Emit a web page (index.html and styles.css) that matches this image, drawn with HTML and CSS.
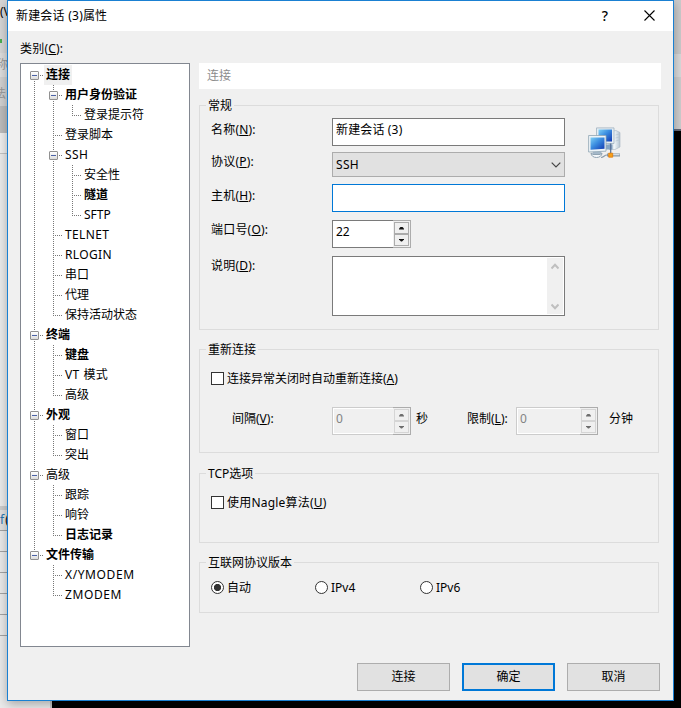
FILE: index.html
```html
<!DOCTYPE html>
<html lang="zh-CN">
<head>
<meta charset="utf-8">
<title>新建会话 (3)属性</title>
<link rel="stylesheet" href="styles.css">
</head>
<body>
<div class="backdrop">
  <div class="back-left">
    <div class="bl-menu">(V</div>
    <div class="bl-tool"><span class="bl-arrow"></span></div>
    <div class="bl-name">称</div>
    <div class="bl-host">法</div>
    <div class="bl-tab"></div>
    <div class="bl-head"></div>
    <div class="bl-body"></div>
    <div class="bl-split"></div>
    <div class="bl-cols"><span>f</span> (</div>
    <div class="bl-rows"></div>
    <div class="bl-end"></div>
  </div>
  <div class="back-right"></div>
</div>

<main class="dialog">
  <header class="titlebar">
    <span class="title">新建会话 (3)属性</span>
    <span class="help">?</span>
    <svg class="close" width="11" height="11" viewBox="0 0 11 11"><path d="M.5.5l10 10M10.5.5l-10 10" stroke="#000" stroke-width="1.1" fill="none"/></svg>
  </header>

  <div class="content">
    <section class="side">
      <div class="category">类别(<u>C</u>):</div>
      <div class="tree">
        <div class="row"><i class="g ef"></i><b class="sel">连接</b></div>
        <div class="row"><i class="g v"></i><i class="g e"></i><b>用户身份验证</b></div>
        <div class="row"><i class="g v"></i><i class="g v"></i><i class="g l"></i><span>登录提示符</span></div>
        <div class="row"><i class="g v"></i><i class="g t"></i><span>登录脚本</span></div>
        <div class="row"><i class="g v"></i><i class="g e"></i><span class="lat">SSH</span></div>
        <div class="row"><i class="g v"></i><i class="g v"></i><i class="g t"></i><span>安全性</span></div>
        <div class="row"><i class="g v"></i><i class="g v"></i><i class="g t"></i><b>隧道</b></div>
        <div class="row"><i class="g v"></i><i class="g v"></i><i class="g l"></i><span>SFTP</span></div>
        <div class="row"><i class="g v"></i><i class="g t"></i><span class="lat">TELNET</span></div>
        <div class="row"><i class="g v"></i><i class="g t"></i><span class="lat">RLOGIN</span></div>
        <div class="row"><i class="g v"></i><i class="g t"></i><span>串口</span></div>
        <div class="row"><i class="g v"></i><i class="g t"></i><span>代理</span></div>
        <div class="row"><i class="g v"></i><i class="g l"></i><span>保持活动状态</span></div>
        <div class="row"><i class="g e"></i><b>终端</b></div>
        <div class="row"><i class="g v"></i><i class="g t"></i><b>键盘</b></div>
        <div class="row"><i class="g v"></i><i class="g t"></i><span class="vt">VT 模式</span></div>
        <div class="row"><i class="g v"></i><i class="g l"></i><span>高级</span></div>
        <div class="row"><i class="g e"></i><b>外观</b></div>
        <div class="row"><i class="g v"></i><i class="g t"></i><span>窗口</span></div>
        <div class="row"><i class="g v"></i><i class="g l"></i><span>突出</span></div>
        <div class="row"><i class="g e"></i><span>高级</span></div>
        <div class="row"><i class="g v"></i><i class="g t"></i><span>跟踪</span></div>
        <div class="row"><i class="g v"></i><i class="g t"></i><span>响铃</span></div>
        <div class="row"><i class="g v"></i><i class="g l"></i><b>日志记录</b></div>
        <div class="row"><i class="g el"></i><b>文件传输</b></div>
        <div class="row"><i class="g"></i><i class="g t"></i><span class="lat modem">X/YMODEM</span></div>
        <div class="row"><i class="g"></i><i class="g l"></i><span class="lat modem">ZMODEM</span></div>
      </div>
    </section>

    <section class="page">
      <div class="page-title">连接</div>

      <div class="group general">
        <div class="legend"><span>常规</span></div>
        <div class="fields">
          <div class="lab">名称(<u>N</u>):</div><div class="input">新建会话 (3)</div>
          <div class="lab lab-up">协议(<u>P</u>):</div>
          <div class="select"><span>SSH</span><svg width="10" height="6" viewBox="0 0 10 6"><path d="M.7.7L5 5 9.3.7" fill="none" stroke="#444" stroke-width="1.2"/></svg></div>
          <div class="lab">主机(<u>H</u>):</div><div class="input focus"></div>
          <div class="lab lab-up">端口号(<u>O</u>):</div>
          <div class="spin"><div class="val">22</div><div class="arrows"><i class="up"></i><i class="down"></i></div></div>
          <div class="lab lab-up">说明(<u>D</u>):</div>
          <div class="area"><div class="scroll">
            <svg width="8" height="7" viewBox="0 0 8 7"><path d="M.5 5.5L4 1.8 7.5 5.5" fill="none" stroke="#bfbfbf" stroke-width="2"/></svg>
            <svg width="8" height="7" viewBox="0 0 8 7"><path d="M.5 1.5L4 5.2 7.5 1.5" fill="none" stroke="#bfbfbf" stroke-width="2"/></svg>
          </div></div>
        </div>
        <svg class="pc" width="34" height="34" viewBox="0 0 34 34">
          <defs>
            <linearGradient id="scr" x1="0" y1="0" x2="1" y2="1"><stop offset="0" stop-color="#7fd0f5"/><stop offset=".45" stop-color="#3b8de0"/><stop offset="1" stop-color="#1238b0"/></linearGradient>
            <linearGradient id="tower" x1="0" y1="0" x2="1" y2="0"><stop offset="0" stop-color="#b9c6d2"/><stop offset=".5" stop-color="#eef4f8"/><stop offset="1" stop-color="#b4c4d1"/></linearGradient>
          </defs>
          <path d="M25 4l3-.5 4 2v14.500l-5 2.500h-6V5z" fill="url(#tower)" stroke="#a8b7c4" stroke-width=".6"/>
          <path d="M27.500 8l4-1M27.500 11l4-1M27.500 14l4-1" stroke="#b4c2ce" stroke-width=".6"/>
          <path d="M8.500 .900h17.500V16.500H8.500z" fill="#e4edf3" stroke="#9fb1bf" stroke-width=".8"/>
          <path d="M10.500 2.500h13.500V14.500H10.500z" fill="url(#scr)"/>
          <path d="M18 17.500h6.500v5h-6.500z" fill="#86a5c6"/>
          <path d="M19 28h13" stroke="#8798a7" stroke-width="3"/>
          <path d="M20 27.700h11.500" stroke="#e6edf2" stroke-width="1.100"/>
          <path d="M22.700 16.500v10" stroke="#566f94" stroke-width="1.200"/>
          <path d="M5 24.500h8l1 3H4z" fill="#a4b8c9"/>
          <path d="M3 26c0 6 11 6 11 0l-2 1.500H5z" fill="#f3f7fa" stroke="#91a4b3" stroke-width="1"/>
          <path d="M.6 8.500h17.400V24.200L.6 25z" fill="#edf4f8" stroke="#8fa5b3" stroke-width=".8"/>
          <path d="M2.500 10.500h14V21.800L2.500 22.700z" fill="url(#scr)"/>
          <path d="M13 30.500c3 0 3-2.500 6-2.500" fill="none" stroke="#8c9cab" stroke-width="1.200"/>
          <path d="M20.700 26.200h4v4h-4z" fill="#f8a117" stroke="#e07b0c" stroke-width=".8"/>
        </svg>
      </div>

      <div class="group reconnect">
        <div class="legend"><span>重新连接</span></div>
        <div class="opt"><i class="check"></i>连接异常关闭时自动重新连接(<u>A</u>)</div>
        <div class="timing">
          <span class="t-int">间隔(<u>V</u>):</span>
          <div class="spin off"><div class="val">0</div><div class="arrows"><i class="up"></i><i class="down"></i></div></div>
          <span class="t-sec">秒</span>
          <span class="t-lim">限制(<u>L</u>):</span>
          <div class="spin off wide"><div class="val">0</div><div class="arrows"><i class="up"></i><i class="down"></i></div></div>
          <span class="t-min">分钟</span>
        </div>
      </div>

      <div class="group tcp">
        <div class="legend"><span>TCP选项</span></div>
        <div class="opt"><i class="check"></i>使用Nagle算法(<u>U</u>)</div>
      </div>

      <div class="group version">
        <div class="legend"><span>互联网协议版本</span></div>
        <div class="radios">
          <div class="opt"><i class="radio on"></i>自动</div>
          <div class="opt"><i class="radio"></i>IPv4</div>
          <div class="opt"><i class="radio"></i>IPv6</div>
        </div>
      </div>
    </section>
  </div>

  <footer class="buttons">
    <div class="btn">连接</div>
    <div class="btn primary">确定</div>
    <div class="btn">取消</div>
  </footer>
</main>
</body>
</html>
```
FILE: styles.css
```css
*, *::before, *::after { box-sizing: border-box; }
html, body { margin: 0; width: 681px; height: 708px; overflow: hidden; }
body {
  position: relative;
  background: #000;
  color: #000;
  font: 12px/18px "Noto Sans", "Noto Sans CJK SC", sans-serif;
  white-space: nowrap;
}
i { font-style: normal; display: block; flex: none; }
u { text-underline-offset: 1px; text-decoration-thickness: 1px; }

/* window behind the dialog */
.backdrop { display: flex; justify-content: space-between; height: 708px; }
.back-left { width: 52px; background: #ebebeb; border-right: 2px solid #c8c8c8; display: flex; flex-direction: column; }
.back-left > div { flex: none; overflow: hidden; }
.bl-menu { height: 30px; padding-top: 3px; background: #d7d7d7; }
.bl-tool { height: 23px; padding-top: 9px; background: #d7d7d7; }
.bl-arrow { display: block; width: 2px; height: 4px; background: #4caf50; }
.bl-name { height: 24px; padding-top: 3px; margin-left: -4px; background: #dedede; color: #999; }
.bl-host { height: 29px; padding-top: 8px; margin-left: -6px; background: #d2d2d2; color: #999; }
.bl-tab { height: 27px; background: #bdbdbd; }
.bl-head { height: 21px; background: #f0f0f0; border-bottom: 1px solid #c4c4c4; }
.bl-body { height: 352px; background: #ececec; }
.bl-split { height: 4px; background: #cdcdcd; }
.bl-cols { height: 21px; padding-top: 1px; background: #e2e2e2; border-bottom: 1px solid #a4a4a4; word-spacing: -2px; }
.bl-cols span { color: #2575b0; }
.bl-rows { height: 105px; background: repeating-linear-gradient(#ebebeb 0 20px, #a4a4a4 20px 21px); }
.bl-end { height: 72px; }
.back-right {
  width: 7px;
  background: linear-gradient(#cbcbcb 0 54px, #dadada 54px 77px, #cecece 77px 129px, #626878 129px 131px, #000 131px);
}

.dialog {
  position: absolute; left: 7px; top: 0;
  width: 667px; height: 701px;
  background: #f0f0f0;
  border: 1px solid #1a80d2;
  box-shadow: 0 3px 10px rgba(0, 0, 0, .3);
}
.titlebar { height: 30px; background: #fff; display: flex; align-items: center; padding: 0 18px 1px 8px; }
.title { flex: 1; letter-spacing: .15px; word-spacing: .5px; }
.help { font-size: 14px; font-weight: 500; margin-right: 36px; }
.content { display: flex; padding: 8px 12px 0; height: 616px; }
.side { width: 170px; }
.category { height: 24px; padding-top: 1px; letter-spacing: .2px; }
.tree { height: 584px; border: 1px solid #828790; background: #fff; padding: 1px 0 0 6px; }
.row { display: flex; height: 20px; line-height: 19px; }
.row b { font-weight: 700; }
.lat { letter-spacing: .35px; }
.modem { letter-spacing: .6px; }
.vt { word-spacing: 1px; letter-spacing: .2px; }
.sel { background: #f0f0f0; margin-left: -2px; padding: 0 2px; }

/* tree guides: one 19px cell per level, the stem runs at 7px */
.g {
  --d: linear-gradient(#777 50%, transparent 50%);
  --h: linear-gradient(90deg, #777 50%, transparent 50%);
  width: 19px; height: 20px; position: relative;
}
.v::before, .t::before, .l::before, .e::before, .ef::before, .el::before {
  content: ""; position: absolute; left: 7px; top: 0; width: 1px; height: 20px;
  background: var(--d) 0 0 / 1px 2px;
}
.l::before, .el::before { height: 10px; }
.ef::before { top: 10px; height: 10px; }
.t, .l, .e, .ef, .el { background: var(--h) 7px 10px / 2px 1px repeat-x; background-clip: content-box; padding-left: 7px; padding-right: 3px; background-origin: border-box; }
.e::after, .ef::after, .el::after {
  content: ""; position: absolute; left: 3px; top: 6px; width: 9px; height: 9px;
  border: 1px solid #919191; border-radius: 1px;
  background: linear-gradient(#4b63a7, #4b63a7) 1px 3px / 5px 1px no-repeat, linear-gradient(#fff, #ddd);
}

.page { width: 462px; margin-left: 9px; }
.page-title { height: 26px; margin-top: 24px; padding: 4px 8px; background: #fff; color: #8c8c8c; }
.group { width: 460px; border: 1px solid #dcdcdc; position: relative; }
.legend { height: 0; padding-left: 6px; }
.legend span { display: inline-block; position: relative; top: -9px; padding: 0 2px; background: #f0f0f0; }
.general { margin-top: 16px; height: 225px; display: grid; grid-template-columns: 365px 1fr; grid-template-rows: 0 1fr; }
.general .legend { grid-column: 1 / 3; }
.fields { padding: 12px 0 0 11px; display: grid; grid-template-columns: 121px 233px; grid-template-rows: 34px 32px 36px 36px 60px; align-items: start; }
.lab { padding-top: 3px; letter-spacing: .2px; }
.lab-up { padding-top: 1px; }
.input { height: 28px; border: 1px solid #7a7a7a; background: #fff; padding: 2px 3px; letter-spacing: .15px; }
.focus { border-color: #0078d7; }
.select { height: 25px; border: 1px solid #acacac; background: #e1e1e1; display: flex; align-items: center; justify-content: space-between; padding: 0 3px; letter-spacing: .3px; }
.area { height: 60px; border: 1px solid #7a7a7a; background: #fff; padding: 1px; display: flex; justify-content: flex-end; }
.scroll { width: 16px; background: #f0f0f0; display: flex; flex-direction: column; align-items: center; justify-content: space-between; padding: 5px 0 4px; }
.pc { margin: 21px 0 0 23px; }

.spin { width: 79px; height: 28px; border: 1px solid #7a7a7a; border-right: 0; background: #fff; display: flex; }
.val { flex: 1; padding: 2px 3px; }
.arrows { width: 18px; height: 28px; margin: -1px 0; border: 1px solid #acacac; border-left: 0; background: #f0f0f0; display: flex; flex-direction: column; padding: 1px; }
.arrows i { height: 12px; width: 15px; border: 1px solid #acacac; display: flex; align-items: center; justify-content: center; }
.arrows i::before { content: ""; width: 5px; height: 3px; background: #111; clip-path: polygon(40% 0, 60% 0, 100% 70%, 100% 100%, 0 100%, 0 70%); }
.arrows .down::before { clip-path: polygon(0 0, 100% 0, 100% 30%, 60% 100%, 40% 100%, 0 30%); }
.off { border-color: #ccc; background: #f0f0f0; color: #838383; box-shadow: inset 1px 1px #fff, inset 0 -1px #fff; }
.off .arrows i { border-color: #d5d5d5; }
.off .arrows i::before { background: #6d6d6d; }
.wide { width: 82px; }

.reconnect { margin-top: 19px; height: 104px; }
.opt { display: flex; align-items: flex-start; height: 18px; margin-left: 11px; }
.check, .radio { width: 13px; height: 13px; border: 1px solid #333; background: #fff; margin: 2px 3px 0 0; }
.reconnect .opt { margin-top: 20px; }
.timing { display: flex; align-items: flex-start; margin-top: 19px; padding-left: 32px; }
.timing span { padding-top: 3px; flex: none; }
.t-int { width: 100px; }
.t-sec { width: 56px; padding-left: 5px; }
.t-lim { width: 49px; }
.t-min { padding-left: 11px; }
.tcp { margin-top: 20px; height: 70px; }
.tcp .opt { margin-top: 20px; letter-spacing: .2px; }
.version { margin-top: 19px; height: 51px; }
.radios { display: flex; margin-top: 16px; }
.radios .opt { width: 104px; margin: 0; }
.radios .opt:first-child { margin-left: 11px; }
.radios .opt:nth-child(2) { width: 105px; }
.radio { border-radius: 50%; }
.on { background: radial-gradient(circle, #333 3.2px, #fff 4px); }

.buttons { display: flex; justify-content: flex-end; gap: 12px; padding: 16px 13px 0; }
.btn { width: 93px; height: 28px; border: 1px solid #adadad; background: #e1e1e1; display: flex; align-items: center; justify-content: center; }
.primary { border: 2px solid #0078d7; }
```
